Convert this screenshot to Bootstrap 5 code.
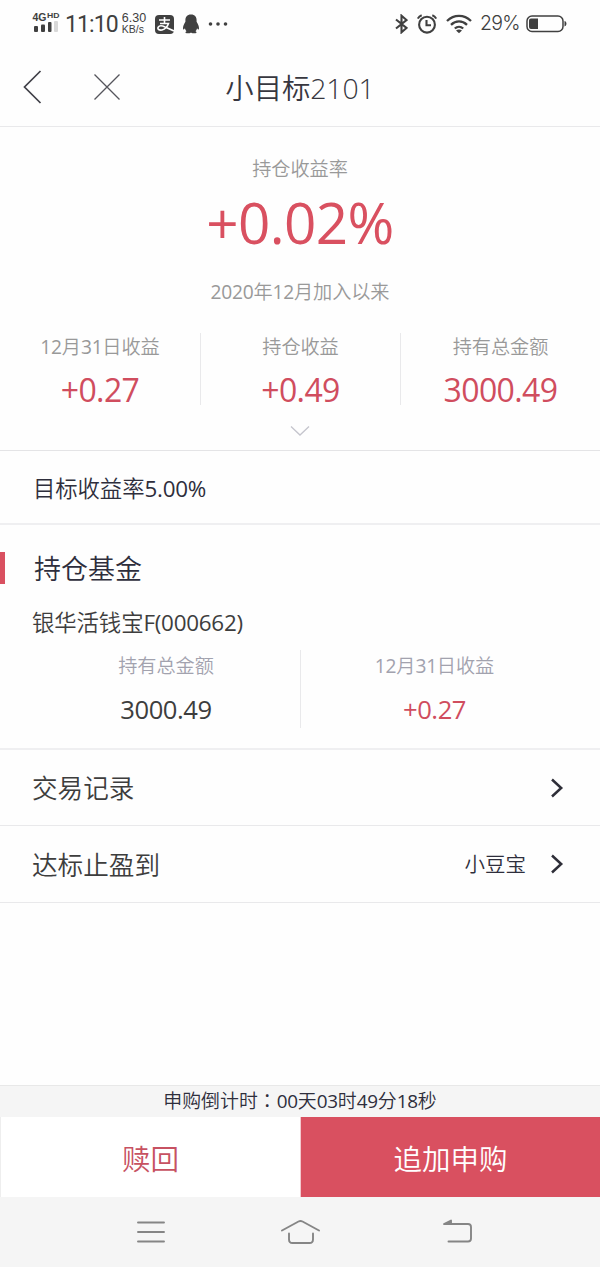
<!DOCTYPE html>
<html lang="zh-CN">
<head>
<meta charset="utf-8">
<meta name="viewport" content="width=device-width, initial-scale=1">
<title>小目标2101</title>
<link rel="stylesheet" href="https://cdn.jsdelivr.net/npm/bootstrap@5.3.0/dist/css/bootstrap.min.css">
<style>
  :root { --brand: #d95060; --line: #e9e9eb; --ink: #2e2e3c; }
  body, button { font-family: "Open Sans", "Noto Sans CJK SC", sans-serif; font-weight: 350; }
  body { color: #3d3d3d; background: #fefefe; line-height: 1; }
  svg { display: block; flex: none; fill: none; }
  .dg { font-weight: 400; letter-spacing: -.25px; }
  .app { height: 1267px; }
  .status { height: 48px; padding: 0 33px 0 32px; color: #404040; }
  .sig { width: 28px; height: 24px; }
  .clock { font-size: 23px; font-weight: 400; letter-spacing: -.9px; margin: 1px 0 0 5px; font-family: Roboto, sans-serif; }
  .rate { font-size: 12.5px; line-height: 11px; width: 27px; margin-left: 4px; font-family: "Liberation Sans", sans-serif; }
  .rate span { display: block; height: 11px; }
  .rate span + span { font-size: 10.5px; }
  .pct { font-size: 19.5px; font-weight: 300; font-family: Inter, sans-serif; letter-spacing: -.7px; width: 39px; white-space: nowrap; }
  .top { height: 79px; border-bottom: 1px solid var(--line); display: grid; grid-template-columns: 150px 1fr 150px; }
  .title-text { font-size: 28.4px; color: #37373f; padding-top: 2px; letter-spacing: -.1px; }
  .summary { height: 324px; border-bottom: 1px solid #e4e4e6; padding-top: 30px; }
  .lbl { font-size: 19.2px; line-height: 24px; color: #999; letter-spacing: -.1px; }
  .lbl-cool { color: #a2a2ae; }
  .big { font-size: 56.6px; font-weight: 400; line-height: 70px; color: var(--brand); margin-top: 7px; letter-spacing: -.6px; }
  .since { margin-top: 22px; }
  .stats { margin-top: 29px; height: 72px; }
  .stats > div + div, .fund > div + div { border-left: 1px solid var(--line); }
  .stats .lbl { margin-top: 2px; }
  .num { font-size: 32px; font-weight: 400; line-height: 36px; color: #d04d5e; margin: 13px 0 -3px; letter-spacing: -.6px; }
  .goal { height: 74px; border-bottom: 2px solid #efeff1; padding: 4px 0 0 33px; font-size: 22.4px; color: var(--ink); letter-spacing: -.1px; }
  .holding { height: 225px; border-bottom: 2px solid #efeff1; padding-top: 27px; }
  .sec { height: 32px; border-left: 5px solid var(--brand); padding-left: 29px; font-size: 27px; color: var(--ink); }
  .fname { font-size: 22.4px; line-height: 28px; margin: 25px 0 0 32px; letter-spacing: -.1px; }
  .fund { margin: 13px 0 0 32px; width: 536px; height: 78px; }
  .fund .lbl { margin-top: 4px; }
  .num-sm { font-size: 25.6px; font-weight: 400; line-height: 32px; margin-top: 16px; letter-spacing: -.45px; }
  .up { color: #d04d5e; }
  .menu-row { height: 77px; border-bottom: 1px solid #e9e9eb; padding: 0 36px 0 32px; font-size: 25.6px; }
  .holding + .menu-row { height: 76px; }
  .menu-row > span { padding-top: 3px; }
  .menu-row > .menu-value { font-size: 20.5px; color: var(--ink); margin-right: 25px; padding-top: 1px; }
  .countdown { height: 32px; background: #f5f5f5; border-top: 1px solid #e8e8e8; font-size: 18.9px; color: var(--ink); padding-bottom: 2px; }
  .colon { font-family: "Noto Sans CJK JP", sans-serif; }
  .act { height: 80px; font-size: 28.5px; border: 0; border-radius: 0; padding: 4px 0 0; }
  .act-out { background: #fff; color: #c75262; border-left: 1px solid #eee; }
  .act-in { background: var(--brand); color: #fff; border-left: 1px solid #f3c9ce; }
  .sysnav { height: 70px; background: #f5f5f5; }
</style>
</head>
<body>
<div class="app d-flex flex-column">
  <div class="status d-flex align-items-center">
    <svg class="sig" viewBox="0 0 28 24">
      <g fill="#404040" font-family="Liberation Sans" font-weight="700"><text x="0.500" y="8.500" font-size="11" textLength="14" lengthAdjust="spacingAndGlyphs">4G</text><text x="15" y="6" font-size="8" textLength="12.500" lengthAdjust="spacingAndGlyphs">HD</text>
      <rect x="2" y="14" width="4" height="6" rx="1"/><rect x="9" y="12.500" width="4" height="7.500" rx="1"/><rect x="16" y="10" width="3.500" height="10" rx="1"/><rect x="22" y="9" width="4" height="11" rx="1" fill="#d8d8d8"/></g>
    </svg>
    <span class="clock">11:10</span>
    <span class="rate"><span>6.30</span><span>KB/s</span></span>
    <svg width="19" height="19" viewBox="0 0 19 19" style="margin-left:6px"><rect width="19" height="19" rx="4" fill="#404040"/><g stroke="#fff" stroke-width="1.600"><path d="M4 5h11M9.500 2v6M5 8.500h8.500c-1 3-3.500 5.700-6.500 6.500-3 .6-4.800-1-3.800-2.800 1.300-2 4.300-1.500 6.800-.2l9 4"/></g></svg>
    <svg class="ms-2" width="18" height="20" viewBox="0 0 18 20"><path fill="#404040" d="M9 .5c-4 0-5.600 2.700-5.600 5.700v1.600C2 10 .8 12.400 1 14.800c.2 1.300 1.200.5 1.900-.6.300 1.300.8 2.200 1.600 3-1.300.6-1.500 2 .2 2.100 1.800.1 3.400-.2 4.300-.9.900.7 2.500 1 4.300.9 1.700-.1 1.500-1.500.2-2.100.8-.8 1.300-1.700 1.600-3 .7 1.100 1.700 1.900 1.900.6.200-2.400-1-4.800-2.400-7V6.200C14.600 3.200 13 .5 9 .5z"/></svg>
    <svg class="ms-2" width="20" height="6" viewBox="0 0 20 6"><g fill="#404040"><circle cx="2.500" cy="3" r="1.800"/><circle cx="10" cy="3" r="1.800"/><circle cx="17.500" cy="3" r="1.800"/></g></svg>
    <div class="ms-auto d-flex align-items-center">
      <svg width="13" height="20" viewBox="0 0 13 20" stroke="#404040" stroke-width="2.100"><path d="M1 5.500l10.500 8.500L6.500 18.300V1.700l5 4.300L1 14.500"/></svg>
      <svg width="20" height="20" viewBox="0 0 20 20" style="margin-left:9px" stroke="#404040" stroke-width="2.100"><circle cx="10" cy="10.700" r="7.900"/><path d="M9.500 6v5.200h4.500M.8 4.600C1.700 3 3 1.900 4.700 1.300M19.200 4.600C18.300 3 17 1.900 15.300 1.300"/></svg>
      <svg width="26" height="20" viewBox="0 0 26 20" style="margin-left:9px" stroke="#404040" stroke-width="2.300"><path d="M1 7c7-6.800 17-6.800 24 0M5 10.900c4.800-4.600 11.200-4.600 16 0M8.800 14.500c2.500-2.300 5.900-2.300 8.400 0"/><path d="M10 16.500c2-1.400 4-1.400 6 0l-3 2.700z" fill="#404040" stroke="none"/></svg>
      <span class="pct ms-2">29%</span>
      <svg width="41" height="18" viewBox="0 0 41 18" style="margin-left:7px"><rect x="1" y="1" width="36" height="15.500" rx="5" stroke="#404040" stroke-width="1.500"/><path d="M5 3.500h7v10.500H5a2 2 0 0 1-2-2v-6.500a2 2 0 0 1 2-2zM38.500 6q2 .3 2 2.700t-2 2.700z" fill="#404040"/></svg>
    </div>
  </div>

  <header class="top align-items-center">
    <div class="d-flex align-items-center">
      <svg width="20" height="34" viewBox="0 0 20 34" style="margin-left:22px" stroke="#404048" stroke-width="1.700"><path d="M18.500 1L2.500 17l16 16"/></svg>
      <svg width="28" height="28" viewBox="0 0 28 28" style="margin-left:51px" stroke="#55555c" stroke-width="1.300"><path d="M1.500 1.500l25 25M26.500 1.500l-25 25"/></svg>
    </div>
    <div class="title-text text-center">小目标2101</div>
  </header>

  <section class="summary text-center">
    <div class="lbl">持仓收益率</div>
    <div class="big">+0.02%</div>
    <div class="lbl since"><span class="dg">2020</span>年<span class="dg">12</span>月加入以来</div>
    <div class="stats row g-0">
      <div class="col-4"><div class="lbl"><span class="dg">12</span>月<span class="dg">31</span>日收益</div><div class="num">+0.27</div></div>
      <div class="col-4"><div class="lbl">持仓收益</div><div class="num">+0.49</div></div>
      <div class="col-4"><div class="lbl">持有总金额</div><div class="num">3000.49</div></div>
    </div>
    <svg class="mx-auto" width="20" height="12" viewBox="0 0 20 12" style="margin-top:20px" stroke="#c5c5cd" stroke-width="1.300"><path d="M1 1.500l9 8.500 9-8.500"/></svg>
  </section>

  <div class="goal d-flex align-items-center"><div>目标收益率<span class="dg">5.00%</span></div></div>

  <section class="holding">
    <div class="sec d-flex align-items-center">持仓基金</div>
    <div class="fname">银华活钱宝<span class="dg">F(000662)</span></div>
    <div class="fund row g-0 text-center">
      <div class="col-6"><div class="lbl lbl-cool">持有总金额</div><div class="num-sm">3000.49</div></div>
      <div class="col-6"><div class="lbl lbl-cool"><span class="dg">12</span>月<span class="dg">31</span>日收益</div><div class="num-sm up">+0.27</div></div>
    </div>
  </section>

  <div class="menu-row d-flex align-items-center"><span class="me-auto">交易记录</span>
    <svg width="13" height="20" viewBox="0 0 13 20" stroke="#2e2e38" stroke-width="2.500"><path d="M1 1.500L10.200 10 1 18.500"/></svg>
  </div>
  <div class="menu-row d-flex align-items-center"><span class="me-auto">达标止盈到</span><span class="menu-value">小豆宝</span>
    <svg width="13" height="20" viewBox="0 0 13 20" stroke="#2e2e38" stroke-width="2.500"><path d="M1 1.500L10.200 10 1 18.500"/></svg>
  </div>

  <footer class="mt-auto">
    <div class="countdown d-flex align-items-center justify-content-center"><div>申购倒计时<span class="colon" lang="ja">：</span><span class="dg">00</span>天<span class="dg">03</span>时<span class="dg">49</span>分<span class="dg">18</span>秒</div></div>
    <div class="row g-0">
      <button class="act act-out col-6">赎回</button>
      <button class="act act-in col-6">追加申购</button>
    </div>
    <div class="sysnav d-flex align-items-center">
      <svg width="600" height="70" viewBox="0 0 600 70" stroke="#858585" stroke-width="1.900" stroke-linecap="round" stroke-linejoin="round"><path d="M138 25.500h26M138 35h26M138 44.500h26M282 33.500l16.500-9q2-1 4 0l16.500 9M289 36.500v6q0 3.500 3.500 3.500h17q3.500 0 3.500-3.500v-6M445 27h23q3 0 3 3v11.500q0 3-3 3h-19.500"/><path d="M444 27l7-3.500v3.500z" fill="#858585"/></svg>
    </div>
  </footer>
</div>
<script src="https://cdn.jsdelivr.net/npm/bootstrap@5.3.0/dist/js/bootstrap.bundle.min.js"></script>
</body>
</html>
